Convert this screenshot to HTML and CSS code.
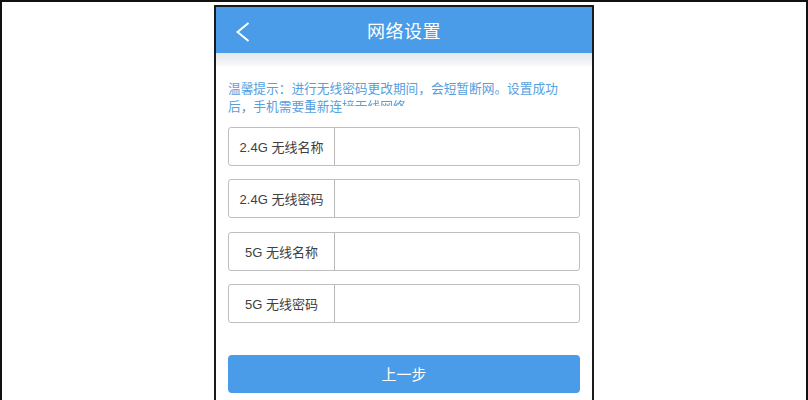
FILE: index.html
```html
<!DOCTYPE html>
<html lang="zh-CN">
<head>
<meta charset="UTF-8">
<meta name="viewport" content="width=device-width, initial-scale=1.0">
<title>网络设置</title>
<link rel="stylesheet" href="styles.css">
</head>
<body>
<div class="frame">
    <div class="phone">
        <div class="header">
            <svg class="back" width="14" height="20" viewBox="0 0 14 20">
                <polyline points="12.5,1 1.5,10 12.5,19" fill="none" stroke="#fff" stroke-width="2"/>
            </svg>
            <span class="title">网络设置</span>
        </div>
        <div class="shade"></div>
        <div class="content">
            <p class="hint">温馨提示：进行无线密码更改期间，会短暂断网。设置成功后，手机需要重新连<span class="cut">接无线网络</span></p>

            <div class="fields">
                <div class="field">
                    <label class="label">2.4G 无线名称</label>
                    <input type="text" class="value">
                </div>
                <div class="field">
                    <label class="label">2.4G 无线密码</label>
                    <input type="text" class="value">
                </div>
                <div class="field">
                    <label class="label">5G 无线名称</label>
                    <input type="text" class="value">
                </div>
                <div class="field">
                    <label class="label">5G 无线密码</label>
                    <input type="text" class="value">
                </div>
            </div>

            <button class="prev">上一步</button>
        </div>
    </div>
</div>
</body>
</html>
```

FILE: styles.css
```css
body {
    margin: 0;
    background-color: #fff;
    font-family: "Liberation Sans", "Noto Sans CJK SC", sans-serif;
}
.frame {
    box-sizing: border-box;
    width: 808px;
    height: 400px;
    border: 2px solid #111;
    border-bottom: none;
    padding-top: 3px;
    display: flex;
    justify-content: center;
    overflow: hidden;
}
.phone {
    box-sizing: border-box;
    width: 380px;
    height: 420px;
    flex-shrink: 0;
    border: 2px solid #1a1a1a;
    border-bottom: none;
    background-color: #fff;
}
.header {
    position: relative;
    height: 46px;
    background-color: #4a9be8;
    display: flex;
    align-items: center;
    justify-content: center;
}
.back {
    position: absolute;
    left: 20px;
    top: 15px;
}
.title {
    color: #fff;
    font-size: 18px;
    letter-spacing: 0.5px;
}
.shade {
    height: 13px;
    background: linear-gradient(#e3e7eb, #f8f9fa);
}
.content {
    padding: 0 12px;
}
.hint {
    margin: 14px 0 0;
    font-size: 12.7px;
    line-height: 18px;
    color: #55a0de;
}
/* the tail of the hint shows only its upper half in the screenshot */
.cut {
    -webkit-mask-image: linear-gradient(#000 45%, transparent 45%);
    mask-image: linear-gradient(#000 45%, transparent 45%);
}
.fields {
    margin-top: 11px;
    display: flex;
    flex-direction: column;
    gap: 13.3px;
}
.field {
    box-sizing: border-box;
    height: 39px;
    display: flex;
    border: 1px solid #bfbfbf;
    border-radius: 3px;
}
.label {
    width: 105px;
    border-right: 1px solid #b8b8b8;
    display: flex;
    align-items: center;
    justify-content: center;
    font-size: 13px;
    color: #404040;
}
.value {
    flex: 1;
    border: none;
    outline: none;
    background: transparent;
    padding: 0 8px;
    font-size: 13px;
}
.prev {
    display: block;
    box-sizing: border-box;
    width: 100%;
    height: 38px;
    margin-top: 32px;
    border: none;
    border-radius: 4px;
    background-color: #4a9be8;
    color: #fff;
    font-family: "Liberation Sans", "Noto Sans CJK SC", sans-serif;
    font-size: 15px;
}
```
